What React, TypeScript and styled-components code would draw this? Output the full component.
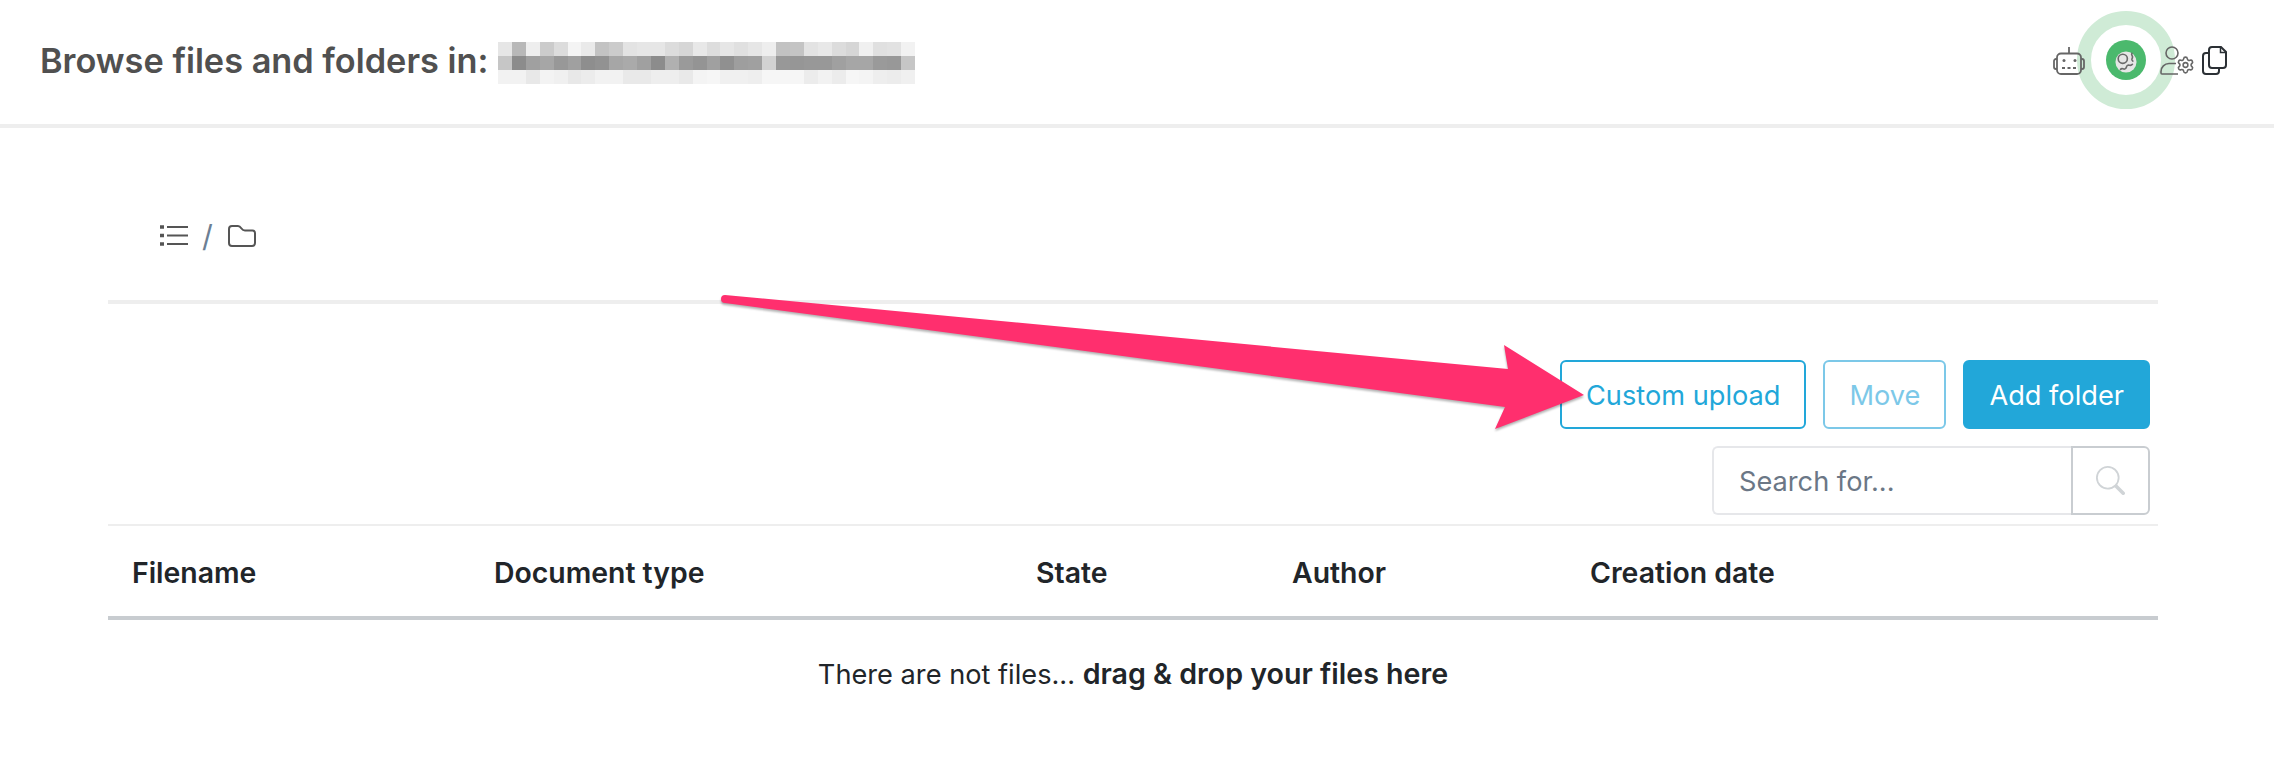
import React from "react";
import styled, { createGlobalStyle } from "styled-components";
import { Settings } from "lucide-react";
import { BsSearch } from "react-icons/bs";

const GlobalStyle = createGlobalStyle`
	html, body {
		margin: 0;
		background: #fff;
		font-family: Inter, "Liberation Sans", sans-serif;
		color: #212529;
	}
`;

const Page = styled.div`
	position: relative;
	width: 2274px;
	height: 774px;
	overflow: hidden;
`;

const Header = styled.header`
	display: flex;
	align-items: center;
	justify-content: space-between;
	box-sizing: border-box;
	height: 128px;
	padding: 0 47px 4px 40px;
	border-bottom: 4px solid #eeeeee;
`;

const TitleRow = styled.div`
	display: flex;
	align-items: center;
`;

const Title = styled.h1`
	margin: 0 10px 0 0;
	font-size: 34.3px;
	font-weight: 600;
	color: #505050;
	white-space: nowrap;
`;

const Mosaic = styled.svg`
	display: block;
	width: 417px;
	height: 42px;
	margin-top: 6px;
`;

const HeaderIcons = styled.div`
	display: flex;
	align-items: center;
`;

const IconSlot = styled.div<{ $left: number }>`
	position: relative;
	z-index: 1;
	display: flex;
	margin-left: ${(p) => p.$left}px;
`;

const ActiveIcon = styled.div`
	position: relative;
	display: flex;
	align-items: center;
	justify-content: center;
	width: 40px;
	height: 40px;
	margin-left: 21px;
	border-radius: 50%;
	background: #4bb96d;

	&::after {
		content: "";
		position: absolute;
		left: -29px;
		top: -29px;
		width: 98px;
		height: 98px;
		box-sizing: border-box;
		border: 14px solid #cfebd6;
		border-radius: 50%;
	}
`;

const Content = styled.main`
	margin: 0 116px 0 108px;
`;

const Breadcrumb = styled.nav`
	display: flex;
	align-items: center;
	box-sizing: border-box;
	height: 172px;
	padding: 64px 0 20px 52px;
`;

const Slash = styled.span`
	margin: 0 15px 0 14px;
	font-size: 30px;
	color: #6c7f94;
`;

const Rule = styled.div<{ $height: number }>`
	height: ${(p) => p.$height}px;
	background: #eeeeee;
`;

const Actions = styled.div`
	display: flex;
	justify-content: flex-end;
	gap: 17px;
	padding: 56px 8px 0 0;
`;

const Button = styled.button<{ $variant: "outline" | "faded" | "solid" }>`
	box-sizing: border-box;
	height: 69px;
	padding: 2px 24px 0;
	border: 2px solid ${(p) => (p.$variant === "faded" ? "#7cc8e8" : "#22a7d9")};
	border-radius: 6px;
	background: ${(p) => (p.$variant === "solid" ? "#22a7d9" : "#fff")};
	color: ${(p) =>
		p.$variant === "solid" ? "#fff" : p.$variant === "faded" ? "#7cc8e8" : "#22a7d9"};
	font-family: inherit;
	font-size: 27.2px;
`;

const SearchBar = styled.div`
	display: flex;
	box-sizing: border-box;
	width: 438px;
	height: 69px;
	margin: 17px 8px 9px auto;
`;

const SearchInput = styled.input`
	flex: 1;
	min-width: 0;
	box-sizing: border-box;
	padding: 2px 25px 0;
	border: 2px solid #e6e7ea;
	border-right: 0;
	border-radius: 6px 0 0 6px;
	outline: none;
	font-family: inherit;
	font-size: 27.2px;

	&::placeholder {
		color: #6b7786;
		opacity: 1;
	}
`;

const SearchButton = styled.button`
	display: flex;
	align-items: center;
	justify-content: center;
	width: 79px;
	padding: 0;
	border: 2px solid #c9cdd1;
	border-radius: 0 6px 6px 0;
	background: #fff;
	color: #d0d4d7;
	font-size: 29px;
`;

const TableHead = styled.div`
	display: grid;
	grid-template-columns: 362px 542px 256px 298px 1fr;
	align-items: center;
	height: 90px;
	border-bottom: 4px solid #c8ccd0;
`;

const HeadCell = styled.div`
	padding: 3px 0 0 24px;
	font-size: 28.4px;
	font-weight: 600;
`;

const EmptyRow = styled.div`
	padding-top: 35px;
	font-size: 27.2px;
	line-height: 38px;
	text-align: center;

	b {
		font-size: 28.6px;
		font-weight: 600;
	}
`;

const Arrow = styled.svg`
	position: absolute;
	left: 0;
	top: 0;
	filter: drop-shadow(0 2px 1px rgba(0, 0, 0, 0.3));
	pointer-events: none;
`;

const mosaicRows = [
	["e6", "b8", "ee", "cb", "dc", "f4", "ea", "c3", "cb", "e3", "e6", "e6", "dc", "d6", "e8", "dd", "e6", "e0", "e6", "ee", "c2", "c4", "e3", "e8", "dc", "d6", "f0", "e0", "e2", "f2"],
	["c6", "8c", "a0", "a6", "98", "a0", "8e", "92", "a6", "aa", "a0", "8c", "b0", "9a", "94", "a0", "90", "9e", "a0", "d2", "98", "96", "98", "98", "a0", "a6", "a6", "9a", "98", "c6"],
	["f2", "f2", "e8", "f3", "f0", "e8", "ec", "f2", "f2", "e9", "e9", "ee", "ee", "e9", "f4", "f6", "f0", "f0", "ee", "f6", "f6", "f6", "ec", "f2", "ec", "f6", "f4", "ee", "ec", "f0"],
];

const columns = ["Filename", "Document type", "State", "Author", "Creation date"];

const RobotIcon = () => (
	<svg width="32" height="29" viewBox="0 0 32 29" fill="none" stroke="#666" strokeWidth="1.8">
		<path d="M16 1v6.500" />
		<rect x="4" y="7.500" width="24" height="20.500" rx="4" />
		<path d="M4 13H3a2 2 0 0 0-2 2v6a2 2 0 0 0 2 2h1M28 13h1a2 2 0 0 1 2 2v6a2 2 0 0 1-2 2h-1" />
		<circle cx="11" cy="14.500" r="1.500" fill="#666" stroke="none" />
		<circle cx="22" cy="14.500" r="1.500" fill="#666" stroke="none" />
		<path d="M9 22h3M14.500 22h3M20 22h3" />
	</svg>
);

const GlobeIcon = () => (
	<svg width="22" height="22" viewBox="0 0 24 24" style={{ marginTop: 4, zIndex: 1 }}>
		<circle cx="12" cy="12" r="11.500" fill="#e6e6e6" />
		<circle cx="8.500" cy="8.500" r="5" fill="none" stroke="#6a6a6a" strokeWidth="1.800" />
		<path
			d="M18.500 2.500c-1.500 2 1.500 3 .5 5s-1.500 2 .5 3.500M6 20c2-2 3 .5 5-.5s1-3.500 3-4 3 1.500 5-1"
			fill="none"
			stroke="#6a6a6a"
			strokeWidth="1.800"
			strokeLinecap="round"
		/>
	</svg>
);

const PersonGearIcon = () => (
	<svg width="35" height="29" viewBox="0 0 35 29" fill="none" stroke="#666" strokeWidth="1.600">
		<circle cx="12" cy="7" r="6" />
		<path d="M16 17.500H9a8 8 0 0 0-8 8V27a1 1 0 0 0 1 1h16" />
		<Settings x={16} y={9.500} width={19} height={19} color="#666" strokeWidth={2} />
	</svg>
);

const CopyIcon = () => (
	<svg width="25" height="29" viewBox="0 0 25 29" fill="none" stroke="#2b3035" strokeWidth="2">
		<path d="M7 7H4a3 3 0 0 0-3 3v15a3 3 0 0 0 3 3h10a3 3 0 0 0 3-3v-3" />
		<path d="M10 1h9l5 5v13a3 3 0 0 1-3 3H10a3 3 0 0 1-3-3V4a3 3 0 0 1 3-3z" />
		<path d="M18.500 1v5.500H24" strokeWidth="1.500" />
	</svg>
);

const ListIcon = () => (
	<svg width="28" height="22" viewBox="0 0 28 22" fill="none" stroke="#555" strokeWidth="2">
		<path d="M7 2h21M7 10.500h21M7 19h21" />
		<path d="M0 2h4M0 10.500h4M0 19h4" strokeWidth="3.500" />
	</svg>
);

const FolderIcon = () => (
	<svg width="28" height="22" viewBox="0 0 28 22" fill="none" stroke="#555" strokeWidth="2">
		<path d="M1 18V4a3 3 0 0 1 3-3h6c2 0 2.500 1 3.500 2.500S15 5.500 17 5.500h7.500A2.500 2.500 0 0 1 27 8v10a3 3 0 0 1-3 3H4a3 3 0 0 1-3-3z" />
	</svg>
);

const App: React.FC = () => {
	return (
		<Page>
			<GlobalStyle />
			<Header>
				<TitleRow>
					<Title>Browse files and folders in:</Title>
					<Mosaic viewBox="0 0 417 42" shapeRendering="crispEdges">
						{mosaicRows.map((row, r) =>
							row.map((gray, c) => (
								<rect key={`${r}-${c}`} x={c * 13.9} y={r * 14} width="13.9" height="14" fill={`#${gray}${gray}${gray}`} />
							))
						)}
					</Mosaic>
				</TitleRow>
				<HeaderIcons>
					<IconSlot $left={0}>
						<RobotIcon />
					</IconSlot>
					<ActiveIcon>
						<GlobeIcon />
					</ActiveIcon>
					<IconSlot $left={14}>
						<PersonGearIcon />
					</IconSlot>
					<IconSlot $left={7}>
						<CopyIcon />
					</IconSlot>
				</HeaderIcons>
			</Header>

			<Content>
				<Breadcrumb>
					<ListIcon />
					<Slash>/</Slash>
					<FolderIcon />
				</Breadcrumb>
				<Rule $height={4} />

				<Actions>
					<Button $variant="outline">Custom upload</Button>
					<Button $variant="faded">Move</Button>
					<Button $variant="solid">Add folder</Button>
				</Actions>

				<SearchBar>
					<SearchInput placeholder="Search for..." />
					<SearchButton>
						<BsSearch />
					</SearchButton>
				</SearchBar>
				<Rule $height={2} />

				<TableHead>
					{columns.map((column) => (
						<HeadCell key={column}>{column}</HeadCell>
					))}
				</TableHead>
				<EmptyRow>
					There are not files... <b>drag &amp; drop your files here</b>
				</EmptyRow>
			</Content>

			<Arrow width="2274" height="774" viewBox="0 0 2274 774">
				<path
					d="M725 295L1508 369L1504 345L1584 395L1495 429L1505 407L725 303Q721 303 721 299Q721 295 725 295Z"
					fill="#ff2f6e"
				/>
			</Arrow>
		</Page>
	);
};

export default App;
